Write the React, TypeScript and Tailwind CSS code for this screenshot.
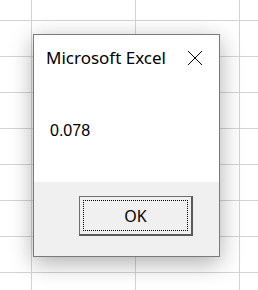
import React from "react";

export default function App() {
  const cells = Array.from({ length: 9 * 4 });
  return (
    <div className="relative w-[258px] h-[290px] overflow-hidden bg-white" style={{ fontFamily: '"Noto Sans", "Open Sans", sans-serif' }}>
      <div className="grid h-full w-full gap-px bg-[#d4d4d4] grid-cols-[31px_103px_103px_1fr] grid-rows-[20px_35px_35px_35px_35px_35px_35px_35px_1fr]">
        {cells.map((_, i) => (
          <div key={i} className="bg-white" />
        ))}
      </div>

      <div className="absolute left-[33px] top-[34px] w-[187px] h-[223px] border border-[#7a7a7a] bg-white flex flex-col shadow-[0_6px_22px_rgba(0,0,0,0.32)]">
        <div className="flex flex-col pl-[12px] pr-[16px] pt-[11px] h-[147px]">
          <div className="flex w-full items-center justify-between">
            <span className="text-[17px] leading-[24px] text-[#000]">Microsoft Excel</span>
            <svg width="16" height="16" viewBox="0 0 16 16">
              <path d="M1 1 L15 15 M15 1 L1 15" stroke="#000" strokeWidth="1" fill="none" />
            </svg>
          </div>
          <div className="pl-[4px] mt-[51px] text-[16px] leading-[20px] text-black" style={{ fontFamily: '"Liberation Sans", Arial, sans-serif' }}>0.078</div>
        </div>
        <div className="flex-1 bg-[#f0f0f0] flex justify-start pl-[45px] pt-[14px]">
          <button className="w-[114px] h-[40px] bg-[#f0f0f0] border border-[#6e6e6e] border-r-2 border-b-2 border-r-[#5a5a5a] border-b-[#5a5a5a] p-[3px]">
            <div className="h-full w-full border border-dotted border-black flex items-center justify-center text-[16px] text-black">
              OK
            </div>
          </button>
        </div>
      </div>
    </div>
  );
}
